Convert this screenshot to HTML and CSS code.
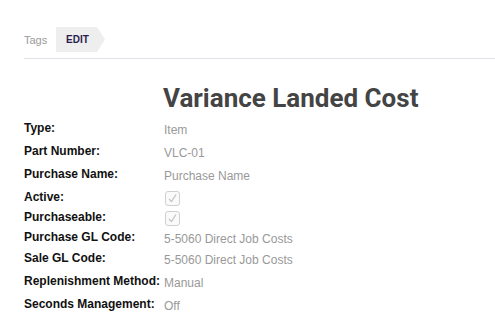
FILE: index.html
```html
<!DOCTYPE html>
<html lang="en">
<head>
    <meta charset="UTF-8">
    <meta name="viewport" content="width=device-width, initial-scale=1.0">
    <title>Variance Landed Cost</title>
    <link rel="stylesheet" href="styles.css">
</head>
<body>
    <div class="tags-bar">
        <span class="tags-label">Tags</span>
        <span class="tag-edit">EDIT</span>
    </div>

    <h1 class="title">Variance Landed Cost</h1>

    <div class="details">
        <div class="row">
            <div class="label">Type:</div>
            <div class="value">Item</div>
        </div>
        <div class="row">
            <div class="label">Part Number:</div>
            <div class="value">VLC-01</div>
        </div>
        <div class="row">
            <div class="label">Purchase Name:</div>
            <div class="value">Purchase Name</div>
        </div>
        <div class="row check">
            <div class="label">Active:</div>
            <div class="value"><span class="checkbox"><svg viewBox="0 0 15 15" width="15" height="15"><path d="M4 8 L6.5 10.5 L11 3.5" fill="none" stroke="#c4c4c4" stroke-width="1.3"/></svg></span></div>
        </div>
        <div class="row check">
            <div class="label">Purchaseable:</div>
            <div class="value"><span class="checkbox"><svg viewBox="0 0 15 15" width="15" height="15"><path d="M4 8 L6.5 10.5 L11 3.5" fill="none" stroke="#c4c4c4" stroke-width="1.3"/></svg></span></div>
        </div>
        <div class="row short">
            <div class="label">Purchase GL Code:</div>
            <div class="value">5-5060 Direct Job Costs</div>
        </div>
        <div class="row">
            <div class="label">Sale GL Code:</div>
            <div class="value">5-5060 Direct Job Costs</div>
        </div>
        <div class="row">
            <div class="label">Replenishment Method:</div>
            <div class="value">Manual</div>
        </div>
        <div class="row">
            <div class="label">Seconds Management:</div>
            <div class="value">Off</div>
        </div>
    </div>
</body>
</html>
```

FILE: styles.css
```css
* {
    margin: 0;
    padding: 0;
    box-sizing: border-box;
}

body {
    font-family: "Liberation Sans", Arial, sans-serif;
    background: #fff;
    color: #111;
    width: 495px;
    overflow: hidden;
}

.tags-bar {
    display: flex;
    align-items: center;
    margin-left: 24px;
    padding: 27px 0 6px;
    border-bottom: 1px solid #dfe3e7;
}

.tags-label {
    font-size: 11px;
    color: #9a9a9a;
    width: 32px;
}

.tag-edit {
    display: flex;
    align-items: center;
    height: 25px;
    width: 49px;
    padding-left: 10px;
    background: #eeeeee;
    clip-path: polygon(0 0, 41px 0, 100% 50%, 41px 100%, 0 100%);
    font-size: 10px;
    font-weight: bold;
    color: #2b1d4d;
}

.title {
    font-family: Roboto, "Liberation Sans", sans-serif;
    font-weight: bold;
    font-size: 26px;
    line-height: 26px;
    color: #444;
    margin: 26px 0 10px 163px;
}

.details {
    padding-left: 24px;
}

.row {
    display: flex;
    min-height: 23px;
}

.row.check {
    min-height: 20px;
}

.row.short {
    min-height: 21px;
}

.label {
    width: 140px;
    font-size: 12px;
    line-height: 14px;
    font-weight: bold;
    color: #111;
}

.value {
    padding-top: 2px;
    font-size: 12px;
    line-height: 14px;
    color: #999;
}

.checkbox {
    display: block;
    width: 15px;
    height: 15px;
    margin-top: -1px;
    margin-left: 1px;
    border: 1px solid #d0d0d0;
    border-radius: 3px;
    background: #fafafa;
}

.checkbox svg {
    display: block;
    margin: -1px 0 0 -1px;
}
```
